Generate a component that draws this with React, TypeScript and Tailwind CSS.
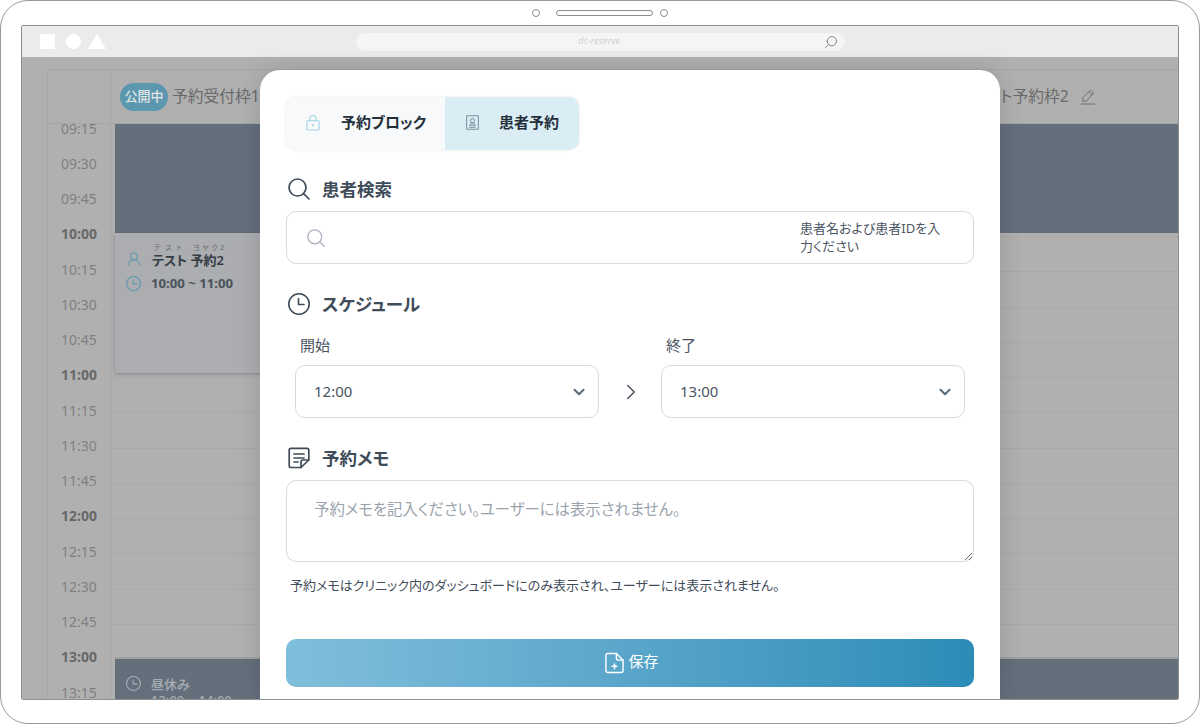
import { ChevronDown, ChevronRight, UserRound } from 'lucide-react';

const font = { fontFamily: '"Noto Sans", "Noto Sans CJK JP", sans-serif' };

const times = [
  '09:15', '09:30', '09:45', '10:00', '10:15', '10:30', '10:45', '11:00', '11:15',
  '11:30', '11:45', '12:00', '12:15', '12:30', '12:45', '13:00', '13:15'
];

function SearchIcon({ className, strokeWidth = 1.7 }: { className?: string; strokeWidth?: number }) {
  return (
    <svg viewBox="0 0 22 22" fill="none" stroke="currentColor" strokeWidth={strokeWidth} strokeLinecap="round" className={className}>
      <circle cx="9.5" cy="9.5" r="8.5" />
      <path d="M15.6 15.6L21 21" />
    </svg>
  );
}

function ClockIcon({ className }: { className?: string }) {
  return (
    <svg viewBox="1 1 22 22" fill="none" stroke="currentColor" strokeWidth="1.6" strokeLinecap="round" strokeLinejoin="round" className={className}>
      <circle cx="12" cy="12" r="10.2" />
      <path d="M11.5 6.5v6h5.5" />
    </svg>
  );
}

function EditIcon() {
  return (
    <svg viewBox="0 0 16 16" fill="none" stroke="#6a6a6a" strokeWidth="0.9" strokeLinejoin="round" className="ml-[7px] h-[16px] w-[16px]">
      <path d="M10.5 1.2l3.2 3-7.4 8H2.6l.2-3.6z" />
      <path d="M8.8 3l3.2 3" />
      <path d="M0.8 15h14.4" />
    </svg>
  );
}

function LockIcon() {
  return (
    <svg viewBox="0 0 16 18" fill="none" stroke="#a3d0e6" strokeWidth="1.2" className="h-[16px] w-[14px]">
      <rect x="1" y="6.5" width="14" height="10.5" rx="1" />
      <path d="M4.5 6.5V4a3.5 3.5 0 0 1 7 0v2.5" />
      <circle cx="8" cy="11.5" r="0.6" fill="#a3d0e6" />
    </svg>
  );
}

function CardIcon() {
  return (
    <svg viewBox="0 0 14 16" fill="none" stroke="#5f6f7d" strokeWidth="0.8" className="h-[15px] w-[13px]">
      <rect x="0.8" y="0.8" width="12.4" height="14.4" />
      <circle cx="7" cy="6" r="2.2" />
      <path d="M3.8 11c.6-1.6 1.8-2.3 3.2-2.3s2.6.7 3.2 2.3z" />
      <path d="M3.5 13.2h7" />
    </svg>
  );
}

function NoteIcon() {
  return (
    <svg viewBox="0 0 22 22" fill="none" stroke="#3f4c5a" strokeWidth="1.7" strokeLinecap="round" strokeLinejoin="round" className="h-[22px] w-[22px]">
      <path d="M13 20.5H3a1.8 1.8 0 0 1-1.8-1.8V3.2A1.8 1.8 0 0 1 3 1.4h16a1.8 1.8 0 0 1 1.8 1.8V13z" />
      <path d="M13 20.5V15a2 2 0 0 1 2-2h5.8" />
      <path d="M6 7h10M6 11h10M6 15h4" />
    </svg>
  );
}

function FileIcon() {
  return (
    <svg viewBox="0 0 20 22" fill="none" stroke="#ffffff" strokeWidth="1.5" strokeLinecap="round" strokeLinejoin="round" className="h-[22px] w-[19px]">
      <path d="M12 1H3a2 2 0 0 0-2 2v16a2 2 0 0 0 2 2h14a2 2 0 0 0 2-2V8z" />
      <path d="M12 1v5a2 2 0 0 0 2 2h5" />
      <path d="M10 12v5M7.5 14.5h5" />
    </svg>
  );
}

function TimeSelect({ label, value }: { label: string; value: string }) {
  return (
    <div className="w-[304px]">
      <p className="pl-[5px] text-[15px] leading-[20px] text-[#4b5563]">{label}</p>
      <div className="mt-[10px] flex h-[53px] items-center justify-between rounded-[10px] border border-[#d8dbdf] pl-[18px] pr-[10px] text-[15px] text-[#4b5563]">
        <span>{value}</span>
        <ChevronDown className="h-[18px] w-[18px] text-[#5b6b7b]" strokeWidth={2.8} />
      </div>
    </div>
  );
}

function SectionTitle({ icon, title }: { icon: React.ReactNode; title: string }) {
  return (
    <div className="flex h-[24px] items-center gap-[12px] pl-[2px]">
      {icon}
      <h2 className="text-[17.5px] font-semibold text-[#3f4c5a]">{title}</h2>
    </div>
  );
}

function Modal() {
  return (
    <div className="absolute bottom-0 left-[238px] top-[13px] w-[740px] overflow-hidden rounded-t-[20px] bg-white px-[26px] pt-[27px] shadow-[0_0_24px_rgba(0,0,0,0.14)]">
      <div className="flex h-[53px] w-[293px] overflow-hidden rounded-[10px] text-[15px] font-semibold text-[#25303b] shadow-[0_0_3px_rgba(0,0,0,0.1)]">
        <div className="flex w-[159px] items-center gap-[21px] bg-[#f7f9fb] pb-[2px] pl-[20px]">
          <LockIcon />
          <span>予約ブロック</span>
        </div>
        <div className="flex flex-1 items-center gap-[20px] bg-[#daecf4] pb-[2px] pl-[21px]">
          <CardIcon />
          <span>患者予約</span>
        </div>
      </div>

      <div className="mt-[27px]">
        <SectionTitle icon={<SearchIcon className="h-[22px] w-[22px] text-[#3f4c5a]" />} title="患者検索" />
      </div>
      <div className="mt-[10px] flex h-[53px] items-center justify-between rounded-[10px] border border-[#d8dbdf] pl-[20px] pr-[28px]">
        <SearchIcon className="h-[18px] w-[18px] text-[#a9b2bc]" strokeWidth={1.6} />
        <p className="w-[145px] pb-[2px] text-[13px] leading-[18px] text-[#4b5563]">患者名および患者IDを入力ください</p>
      </div>

      <div className="mt-[28px]">
        <SectionTitle icon={<ClockIcon className="h-[22px] w-[22px] text-[#3f4c5a]" />} title="スケジュール" />
      </div>
      <div className="mt-[19px] flex items-end px-[9px]">
        <TimeSelect label="開始" value="12:00" />
        <div className="flex h-[53px] flex-1 items-center justify-center pl-[1px]">
          <ChevronRight className="h-[26px] w-[26px] text-[#4b5563]" strokeWidth={1.4} />
        </div>
        <TimeSelect label="終了" value="13:00" />
      </div>

      <div className="mt-[28px]">
        <SectionTitle icon={<NoteIcon />} title="予約メモ" />
      </div>
      <textarea
        placeholder="予約メモを記入ください。ユーザーには表示されません。"
        className="mt-[10px] block h-[82px] w-full rounded-[10px] border border-[#d8dbdf] px-[27px] py-[18px] text-[15.4px] leading-[22px] outline-none placeholder:text-[#9aa3ad]"
      />
      <p className="mt-[14px] pl-[4px] text-[13px] leading-[18px] text-[#3f4c5a]">
        予約メモはクリニック内のダッシュボードにのみ表示され、ユーザーには表示されません。
      </p>

      <button className="mt-[45px] flex h-[48px] w-full items-center justify-center gap-[4px] rounded-[10px] bg-gradient-to-r from-[#80bfdb] to-[#2b8cb8] pl-[4px] text-[15px] text-white">
        <FileIcon />
        <span className="pb-[3px]">保存</span>
      </button>
    </div>
  );
}

function Calendar() {
  return (
    <div className="flex h-full bg-[#b0b0b0] pl-[25px] pt-[12px]">
      <div className="flex min-w-0 flex-1 flex-col border-l border-[#a6a6a6]">
        <div className="flex h-[55px] shrink-0 border-b border-t border-[#a6a6a6] text-[15.75px] text-[#6a6a6a]">
          <div className="w-[63px] shrink-0 border-r border-[#a6a6a6]" />
          <div className="flex w-[800px] shrink-0 items-center gap-[4px] pl-[9px]">
            <span className="flex h-[28px] w-[48px] items-center justify-center rounded-full bg-[#5b98b0] text-[13px] font-medium text-[#e4e4e4]">公開中</span>
            <span>予約受付枠1</span>
          </div>
          <div className="flex flex-1 items-center gap-[4px] pl-[9px]">
            <span className="flex h-[28px] w-[48px] items-center justify-center rounded-full bg-[#5b98b0] text-[13px] font-medium text-[#e4e4e4]">公開中</span>
            <span>テスト予約枠2</span>
            <EditIcon />
          </div>
        </div>

        <div className="flex min-h-0 flex-1 overflow-hidden">
          <div className="-mt-[13.5px] w-[63px] shrink-0 border-r border-[#a6a6a6]">
            {times.map((time) => (
              <div
                key={time}
                className={`flex h-[35.25px] items-center justify-center text-[14px] ${
                  time.endsWith(':00') ? 'font-bold text-[#686868]' : 'text-[#808080]'
                }`}
              >
                {time}
              </div>
            ))}
          </div>

          <div className="relative min-w-0 flex-1 bg-[repeating-linear-gradient(to_bottom,transparent_0,transparent_34.25px,#a9a9a9_34.25px,#a9a9a9_35.25px)] bg-[position:0_-28px]">
            <div className="flex flex-col pl-[4px]">
              <div className="h-[109px] bg-[#646f7c]" />
              <div className="h-[140px] w-[600px] bg-[#abadb0] pl-[11px] pt-[11px] shadow-[0_1px_3px_rgba(0,0,0,0.25)]">
                <div className="flex items-end gap-[10px] text-[#353c44]">
                  <UserRound className="mb-[1px] h-[16px] w-[16px] text-[#5b98b0]" strokeWidth={1.6} />
                  <div className="font-semibold">
                    <p className="flex gap-[6px] pl-[2px] text-[7px] font-normal leading-[8px] text-[#6a6a6a]">
                      <span className="tracking-[5px]">テスト</span>
                      <span className="tracking-[2.5px]">ヨヤク2</span>
                    </p>
                    <p className="text-[13px] leading-[16px]">テスト 予約2</p>
                  </div>
                </div>
                <div className="mt-[6px] flex items-center gap-[10px] text-[13.2px] font-bold text-[#4a525b]">
                  <ClockIcon className="h-[15px] w-[15px] text-[#5b98b0]" />
                  <span>10:00 ~ 11:00</span>
                </div>
              </div>
              <div className="h-[284px]" />
              <div className="flex h-[60px] items-start gap-[10px] border-t-2 border-[#a0a0a0] bg-[#646f7c] pl-[11px] pt-[17px] text-[13px] font-medium text-[#a8adb3]">
                <ClockIcon className="h-[15px] w-[15px]" />
                <div>
                  <p className="leading-[16px]">昼休み</p>
                  <p className="leading-[16px]">13:00 ~ 14:00</p>
                </div>
              </div>
            </div>
          </div>
        </div>
      </div>
    </div>
  );
}

export default function App() {
  return (
    <div style={font} className="flex h-[724px] w-[1200px] flex-col overflow-hidden rounded-[28px] border border-[#9a9a9a] bg-white [font-feature-settings:'palt']">
      <div className="flex h-[24px] shrink-0 items-center pl-[531px]">
        <span className="h-[8px] w-[8px] rounded-full border border-[#8a8a8a]" />
        <span className="ml-[16px] h-[6px] w-[97px] rounded-full border border-[#8a8a8a]" />
        <span className="ml-[7px] h-[8px] w-[8px] rounded-full border border-[#8a8a8a]" />
      </div>

      <div className="mx-[20px] flex h-[675px] flex-col overflow-hidden rounded-[2px] border border-[#8f8f8f]">
        <div className="flex h-[31px] shrink-0 items-center bg-[#ebebeb] pl-[18px]">
          <span className="h-[15px] w-[15px] bg-white" />
          <span className="ml-[11px] h-[15px] w-[15px] rounded-full bg-white" />
          <svg viewBox="0 0 18 15" className="ml-[7px] h-[15px] w-[18px]">
            <path d="M9 0l9 15H0z" fill="#ffffff" />
          </svg>
          <div className="ml-[250px] flex h-[18px] w-[489px] items-center rounded-full bg-[#f5f5f5] pl-[222px] pr-[8px]">
            <span className="text-[9.5px] font-light italic text-[#c4c4c4]">dc-reserve</span>
            <SearchIcon className="ml-auto h-[12px] w-[12px] -scale-x-100 text-[#777777]" strokeWidth={1.6} />
          </div>
        </div>

        <div className="relative min-h-0 flex-1">
          <Calendar />
          <Modal />
        </div>
      </div>
    </div>
  );
}
